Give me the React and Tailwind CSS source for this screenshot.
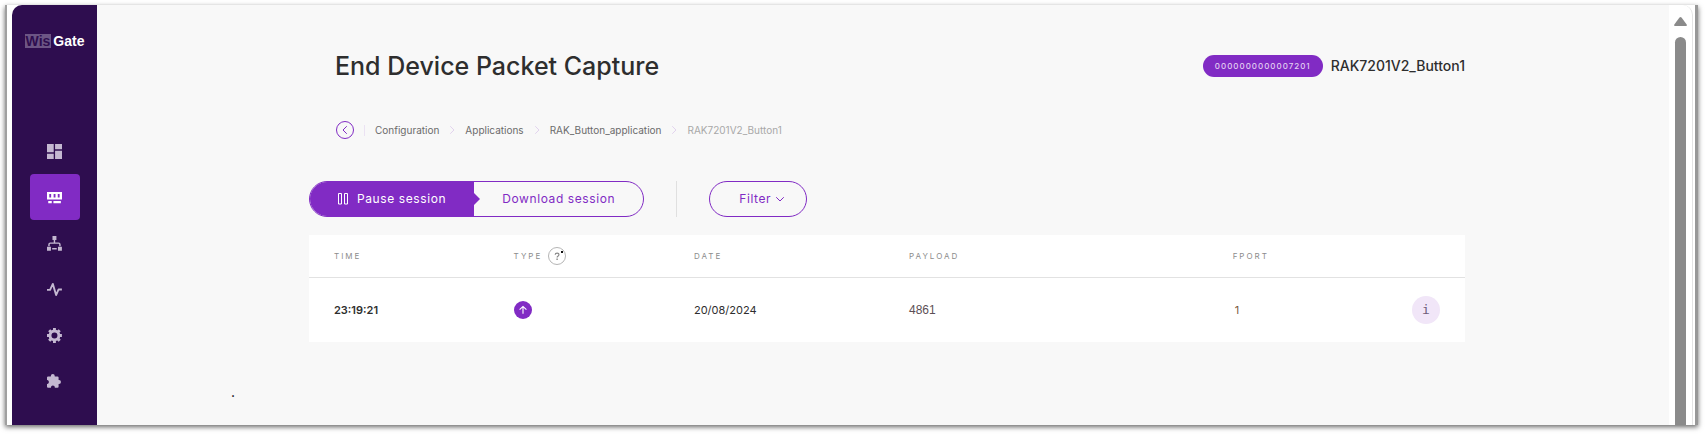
import React from "react";

const navItems = [
  {
    label: "Dashboard",
    icon: (
      <path d="M0 0h6.5v8H0zM7.8 0h6.7v5H7.8zM0 9.5h6.5v5H0zM7.8 6.5h6.7v8H7.8z" />
    ),
  },
  {
    label: "Gateway",
    active: true,
    icon: (
      <path
        fillRule="evenodd"
        d="M0 1.9h14.5v7.3H0zM2.2 3.9v3.3H4V3.9zM6.4 3.9v3.3h1.8V3.9zM10.4 3.9v3.3h1.8V3.9zM1.2 10.6h3.4v2.2H1.2zM6.2 10.6h7.2v2.2H6.2z"
      />
    ),
  },
  {
    label: "Network",
    icon: (
      <>
        <path d="M5.3 0h3.8v3.8H5.3zM0 10.4h3.8v3.8H0zM10.6 10.4h3.8v3.8h-3.8zM5 11.6h4.4v1.4H5z" />
        <path d="M7.2 3.8v3.1M1.9 9.8V8.2q0-1.3 1.3-1.3h8q1.3 0 1.3 1.3v1.6" fill="none" stroke="currentColor" strokeWidth="1.4" />
      </>
    ),
  },
  {
    label: "Diagnostics",
    icon: (
      <path d="M0 7.6h3L5.6 1.8 8.8 12.6l2.4-5.4h3.2" fill="none" stroke="currentColor" strokeWidth="1.8" strokeLinejoin="round" />
    ),
  },
  {
    label: "Settings",
    icon: (
      <>
        <circle cx="7.2" cy="7.2" r="4.3" fill="none" stroke="currentColor" strokeWidth="2.8" />
        <path
          d="M7.2 0v2.5M7.2 11.9v2.5M0 7.2h2.5M11.9 7.2h2.5M2.1 2.1l1.8 1.8M10.5 10.5l1.8 1.8M2.1 12.3l1.8-1.8M10.5 3.9l1.8-1.8"
          fill="none"
          stroke="currentColor"
          strokeWidth="2.8"
        />
      </>
    ),
  },
  {
    label: "Extensions",
    icon: (
      <path d="M0 3.4Q0 2.3 1.1 2.3H3.7V1.9a1.9 1.9 0 0 1 3.8 0v.4h2.6q1.1 0 1.1 1.1v2.5h.4a1.9 1.9 0 0 1 0 3.8h-.4v2.6q0 1.1-1.1 1.1H7.6v-.4a1.9 1.9 0 0 0-3.8 0v.4H1.1Q0 13.4 0 12.3V9.6h.4a1.9 1.9 0 0 0 0-3.7H0z" />
    ),
  },
];

const crumbs = ["Configuration", "Applications", "RAK_Button_application", "RAK7201V2_Button1"];

function Chevron({ className, d }) {
  return (
    <svg viewBox="0 0 10 10" className={className} fill="none" stroke="currentColor" strokeLinecap="round" strokeLinejoin="round" aria-hidden="true">
      <path d={d} />
    </svg>
  );
}

function Sidebar() {
  return (
    <aside className="flex w-[85px] shrink-0 flex-col items-center rounded-tl-[10px] bg-[#2e0d4f] pt-[29px] pb-5">
      <a href="#home" className="flex items-center gap-0.5 font-['Liberation_Sans',sans-serif] text-[14px] leading-[14px] font-bold">
        <span className="bg-[#6c5585] px-px text-[#2e0d4f]">Wis</span>
        <span className="text-white">Gate</span>
      </a>
      <nav className="mt-[80px] flex flex-col">
        {navItems.map((item) => (
          <a
            key={item.label}
            href={"#" + item.label.toLowerCase()}
            aria-label={item.label}
            className={
              item.active
                ? "flex h-[46px] w-[50px] items-center justify-center rounded bg-[#812bc4] text-white"
                : "flex h-[46px] w-[50px] items-center justify-center text-[#c4b8d1]"
            }
          >
            <svg viewBox="0 0 14.5 14.5" className="size-[15px]" fill="currentColor" aria-hidden="true">
              {item.icon}
            </svg>
          </a>
        ))}
      </nav>
    </aside>
  );
}

function Scrollbar() {
  return (
    <div className="flex w-6 shrink-0 flex-col items-center rounded-tr-[10px] border-r border-[#e4e4e4] bg-white pt-3" aria-hidden="true">
      <svg viewBox="0 0 13 9" className="h-[9px] w-[13px] shrink-0" fill="#8a8a8a">
        <path d="M5.5.6q1-1.2 2 0L12.7 7.4Q13.2 9 11.8 9H1.2Q-.2 9 .3 7.4z" />
      </svg>
      <div className="mt-[11px] w-[11px] grow rounded-t-full bg-[#8a8a8a]" />
    </div>
  );
}

export default function App() {
  return (
    <div className="bg-white pt-[5px] pr-[8px] pb-[9px] pl-[5px] font-['Inter',sans-serif] text-[#2e2e2e]">
      <div className="flex min-h-[420px] border-r-[3px] border-l-2 border-r-[#989898] border-l-[#a0a0a0] bg-white pr-0.5 pl-[5px] shadow-[0_2px_5px_rgba(0,0,0,0.6)]">
        <Sidebar />
        <main className="min-w-0 grow bg-[#f8f8f8] pl-2">
          <div className="mx-auto max-w-[1156px] pt-[43px]">
            <div className="flex items-center justify-between pl-[26px]">
              <h1 className="text-[25px] leading-9 font-medium">End Device Packet Capture</h1>
              <div className="flex items-center gap-2">
                <span className="rounded-full bg-[#812bc4] px-3 text-[8px] leading-[22px] font-medium tracking-[1px] text-[#e3cff2]">
                  0000000000007201
                </span>
                <span className="text-[14px] leading-5 font-medium">RAK7201V2_Button1</span>
              </div>
            </div>

            <nav aria-label="Breadcrumb" className="mt-[37px] flex items-center pl-[27px] text-[10px] leading-[18px] text-[#6b6b6b]">
              <button type="button" aria-label="Back" className="flex size-[18px] items-center justify-center rounded-full border border-[#812bc4] text-[#812bc4]">
                <Chevron className="size-[10px]" d="M6.5 1.5 3 5l3.5 3.5" />
              </button>
              <span className="mx-[10px] h-[11px] w-px bg-[#ebe2f3]" />
              <ol className="flex">
                {crumbs.map((crumb, i) => (
                  <li key={crumb} className="flex items-center">
                    {i > 0 && <Chevron className="mx-2 size-[10px] text-[#e2d3ee]" d="M3.5 1.5 7 5 3.5 8.5" />}
                    {i === crumbs.length - 1 ? (
                      <span className="text-[#a8a8a8]">{crumb}</span>
                    ) : (
                      <a href={"#" + crumb}>{crumb}</a>
                    )}
                  </li>
                ))}
              </ol>
            </nav>

            <div className="mt-[42px] flex items-center text-[12px] leading-[18px] tracking-wider">
              <div className="flex h-9 overflow-hidden rounded-full border border-[#812bc4]">
                <button type="button" className="flex items-center gap-[9px] bg-[#812bc4] pr-7 pl-7 text-white">
                  <svg viewBox="0 0 10 12" className="h-3 w-[10px]" fill="none" stroke="currentColor" aria-hidden="true">
                    <path d="M.5.5h3v10.5h-3zM6.5.5h3v10.5h-3z" />
                  </svg>
                  Pause session
                </button>
                <button type="button" className="flex items-center pr-7 text-[#812bc4]">
                  <svg viewBox="0 0 6 12" className="mr-[22px] h-3 w-[6px]" fill="#812bc4" aria-hidden="true">
                    <path d="M0 0l6 6-6 6z" />
                  </svg>
                  Download session
                </button>
              </div>
              <span className="mx-8 h-9 w-px bg-[#e0e0e0]" />
              <button type="button" className="flex h-9 items-center gap-1 rounded-full border border-[#812bc4] pr-[21px] pl-[29px] text-[#812bc4]">
                Filter
                <Chevron className="size-[10px]" d="M1.5 3.5 5 7l3.5-3.5" />
              </button>
            </div>

            <table className="mt-[18px] w-full table-fixed bg-white text-left">
              <colgroup>
                <col className="w-[17.7%]" />
                <col className="w-[15.6%]" />
                <col className="w-[18.6%]" />
                <col className="w-[28%]" />
                <col />
              </colgroup>
              <thead>
                <tr className="h-[42px] border-b border-[#e2e2e2] text-[8px] tracking-[2px] text-[#8c8c8c]">
                  <th className="pl-[25px] font-normal">TIME</th>
                  <th className="font-normal">
                    <div className="flex items-center gap-1.5">
                      TYPE
                      <button type="button" aria-label="Packet types" className="flex size-[18px] items-center justify-center rounded-full border border-[#b5b5b5]">
                        <svg viewBox="0 0 16 16" className="size-4" fill="none" aria-hidden="true">
                          <path d="M6.2 6.8q0-1.7 1.9-1.7t1.8 1.6q0 .9-1 1.5-.8.5-.8 1.4" stroke="#888" strokeWidth="1.2" />
                          <path d="M7.4 10.6h1.4v1.4H7.4z" fill="#888" />
                          <path d="M12 3h2v2h-2z" fill="#111" />
                        </svg>
                      </button>
                    </div>
                  </th>
                  <th className="font-normal">DATE</th>
                  <th className="font-normal">PAYLOAD</th>
                  <th className="font-normal">FPORT</th>
                </tr>
              </thead>
              <tbody>
                <tr className="h-[65px] text-[11px]">
                  <td className="pl-[25px] font-semibold">23:19:21</td>
                  <td>
                    <svg viewBox="0 0 18 18" className="size-[18px]" role="img" aria-label="Uplink">
                      <circle cx="9" cy="9" r="9" fill="#812bc4" />
                      <path d="M9 12.8V5.6M5.6 8.6 9 5.4l3.4 3.2" fill="none" stroke="#fff" strokeWidth="1.1" />
                    </svg>
                  </td>
                  <td>20/08/2024</td>
                  <td className="font-['Liberation_Sans',sans-serif] text-[12px] text-[#5c4f55]">4861</td>
                  <td>
                    <div className="flex items-center justify-between pr-[25px]">
                      <span className="pl-0.5 text-[#7a5a3c]">1</span>
                      <button type="button" aria-label="Packet details" className="size-7 rounded-full bg-[#f1e6f8] font-['DejaVu_Sans_Mono',monospace] text-[13px] text-[#6d5c78]">
                        i
                      </button>
                    </div>
                  </td>
                </tr>
              </tbody>
            </table>
          </div>
          <p className="mt-10 pl-[126px] text-[14px] leading-5 text-black">.</p>
        </main>
        <Scrollbar />
      </div>
    </div>
  );
}
